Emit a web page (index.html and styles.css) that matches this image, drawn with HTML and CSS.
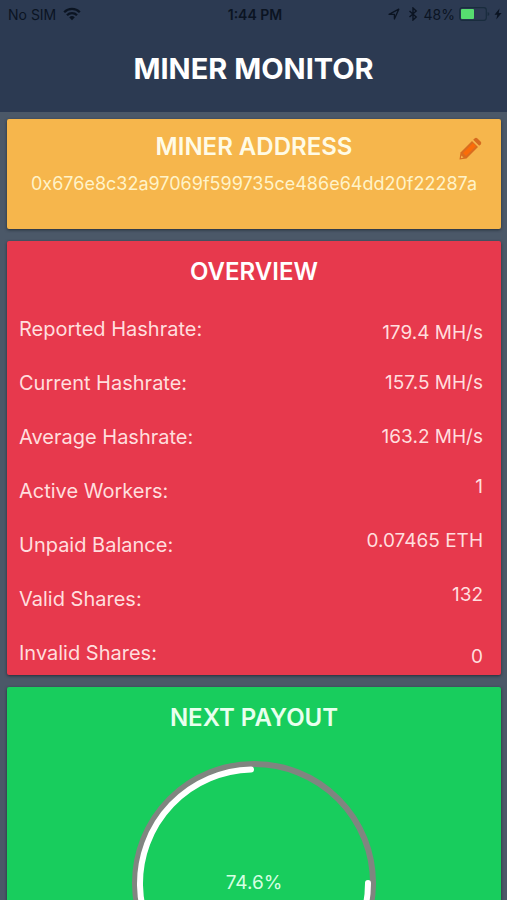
FILE: index.html
```
<!DOCTYPE html>
<html lang="en">
<head>
<meta charset="utf-8">
<meta name="viewport" content="width=device-width, initial-scale=1">
<title>Miner Monitor</title>
<link rel="stylesheet" href="styles.css">
</head>
<body>
<header class="top">
  <div class="status">
    <div class="status-side">
      <span>No SIM</span>
      <svg class="wifi" viewBox="0 0 18 14" aria-hidden="true"><path d="M1.2 5.2a11 11 0 0 1 15.6 0M4 8.2a7 7 0 0 1 10 0" fill="none" stroke="currentColor" stroke-width="2.3"/><path d="M9 13.2 6.2 10.3a4 4 0 0 1 5.6 0z" fill="currentColor"/></svg>
    </div>
    <time class="clock">1:44 PM</time>
    <div class="status-side status-right">
      <svg class="locate" viewBox="0 0 12 12" aria-hidden="true"><path d="M1 6.3 10.8 1.2 6.4 11V6.3z" fill="none" stroke="currentColor" stroke-width="1.3" stroke-linejoin="round"/></svg>
      <svg class="bluetooth" viewBox="0 0 10 14" aria-hidden="true"><path d="M1.5 4 8.2 10 5 13V1l3.200 3L1.5 10" fill="none" stroke="currentColor" stroke-width="1.4"/></svg>
      <span>48%</span>
      <svg class="battery" viewBox="0 0 31 14" aria-hidden="true"><rect x=".7" y=".7" width="26.600" height="12.600" rx="2.500" fill="none" stroke="#192c3d" stroke-width="1.2"/><rect x="2" y="2" width="13" height="10" rx="1" fill="#57dd70"/><path d="M28.600 5v4q1.800-.5 1.800-2t-1.800-2" fill="#192c3d"/></svg>
      <svg class="bolt" viewBox="0 0 8 12" aria-hidden="true"><path d="M5.500.5.500 6.800h2.800L2.300 11.500 7.600 5H4.700z" fill="currentColor"/></svg>
    </div>
  </div>
  <h1>MINER MONITOR</h1>
</header>
<main class="cards">
  <section class="card address">
    <h2>MINER ADDRESS</h2>
    <button class="edit" type="button" aria-label="Edit address">
      <svg viewBox="0 0 24 24" aria-hidden="true"><path d="M1.500 22.500 2.500 15.500 14 4l6 6L8.500 21.500z" fill="#d96d1e"/><path d="M5 16 15 6l3 3L8 19z" fill="#fb6c08"/><path d="m3.400 18.500-.6 2.700 2.700-.6z" fill="#f6b64c"/><path d="m15.200 2.800 1.600-1.600q1.200-1 2.400 0l3.600 3.600q1 1.200 0 2.400l-1.600 1.600z" fill="#d66b1f"/></svg>
    </button>
    <p class="hash">0x676e8c32a97069f599735ce486e64dd20f22287a</p>
  </section>
  <section class="card overview">
    <h2>OVERVIEW</h2>
    <dl class="stats">
      <div class="stat low"><dt>Reported Hashrate:</dt><dd>179.4 MH/s</dd></div>
      <div class="stat"><dt>Current Hashrate:</dt><dd>157.5 MH/s</dd></div>
      <div class="stat"><dt>Average Hashrate:</dt><dd>163.2 MH/s</dd></div>
      <div class="stat high"><dt>Active Workers:</dt><dd>1</dd></div>
      <div class="stat high"><dt>Unpaid Balance:</dt><dd>0.07465 ETH</dd></div>
      <div class="stat high"><dt>Valid Shares:</dt><dd>132</dd></div>
      <div class="stat low"><dt>Invalid Shares:</dt><dd>0</dd></div>
    </dl>
  </section>
  <section class="card payout">
    <h2>NEXT PAYOUT</h2>
    <div class="gauge">
      <svg viewBox="0 0 244 244" aria-hidden="true"><circle cx="122" cy="122" r="119" fill="none" stroke="#808580" stroke-width="6"/><path d="M236 122A114 114 0 1 1 119 8.500" fill="none" stroke="#fff" stroke-width="6" stroke-linecap="round"/></svg>
      <span class="percent">74.6%</span>
    </div>
  </section>
</main>
</body>
</html>
```
FILE: styles.css
```
* {
  box-sizing: border-box;
}

html {
  scrollbar-width: none;
}

body {
  margin: 0;
  background: #4b5868;
  color: #fff;
  font-family: Inter, "Liberation Sans", sans-serif;
}

h1,
h2,
p,
dl,
dd {
  margin: 0;
}

.top {
  padding-bottom: 24px;
  background: #2c3a52;
}

.status {
  display: grid;
  grid-template-columns: 1fr auto 1fr;
  align-items: center;
  height: 28px;
  padding: 0 5px 0 8px;
  color: #0b1422;
  font-size: 14px;
}

.status-side {
  display: flex;
  align-items: center;
  gap: 7px;
}

.status-right {
  justify-content: flex-end;
  gap: 4px;
}

.clock {
  font-weight: 600;
}

.wifi {
  width: 18px;
  height: 14px;
}

.locate {
  width: 12px;
  height: 12px;
  margin-right: 4px;
}

.bluetooth {
  width: 10px;
  height: 14px;
  margin-right: 2px;
}

.battery {
  width: 31px;
  height: 14px;
}

.bolt {
  width: 8px;
  height: 12px;
}

h1 {
  padding-top: 22px;
  font-size: 29px;
  font-weight: 700;
  line-height: 38px;
  text-align: center;
}

.cards {
  display: grid;
  gap: 12px;
  padding: 7px 6px 12px 7px;
}

.card {
  position: relative;
  border-radius: 2px;
  box-shadow: 0 1px 3px rgb(20 28 40 / 70%);
}

h2 {
  font-size: 24px;
  font-weight: 600;
  line-height: 30px;
  text-align: center;
}

.address {
  padding: 13px 8px 33px;
  background: #f6b64c;
  color: #fffbe6;
}

.edit {
  position: absolute;
  top: 18px;
  right: 19px;
  width: 24px;
  height: 24px;
  padding: 0;
  border: 0;
  background: none;
}

.edit svg {
  display: block;
  width: 24px;
  height: 24px;
}

.hash {
  padding-top: 10px;
  color: #fff3c8;
  font-size: 18px;
  line-height: 24px;
  text-align: center;
}

.overview {
  padding: 16px 0 6px;
  background: #e7394d;
}

.stats {
  display: grid;
  gap: 22px;
  padding: 26px 18px 0 12px;
  color: #ffdede;
  font-size: 20px;
  line-height: 24px;
}

.stat {
  display: flex;
  align-items: center;
  justify-content: space-between;
  height: 32px;
}

.stat dt {
  align-self: center;
}

.stat dd {
  font-size: 19px;
}

.stat.low {
  align-items: flex-end;
}

.stat.high {
  align-items: flex-start;
}

.payout {
  padding: 16px 12px 32px;
  background: #18cd5d;
}

.payout h2 {
  color: #e8ffee;
}

.gauge {
  display: grid;
  place-items: center;
  padding-top: 28px;
}

.gauge > * {
  grid-area: 1 / 1;
}

.gauge svg {
  display: block;
  width: 244px;
  height: 244px;
}

.percent {
  color: #d6ffe2;
  font-size: 19px;
  line-height: 24px;
}
```
